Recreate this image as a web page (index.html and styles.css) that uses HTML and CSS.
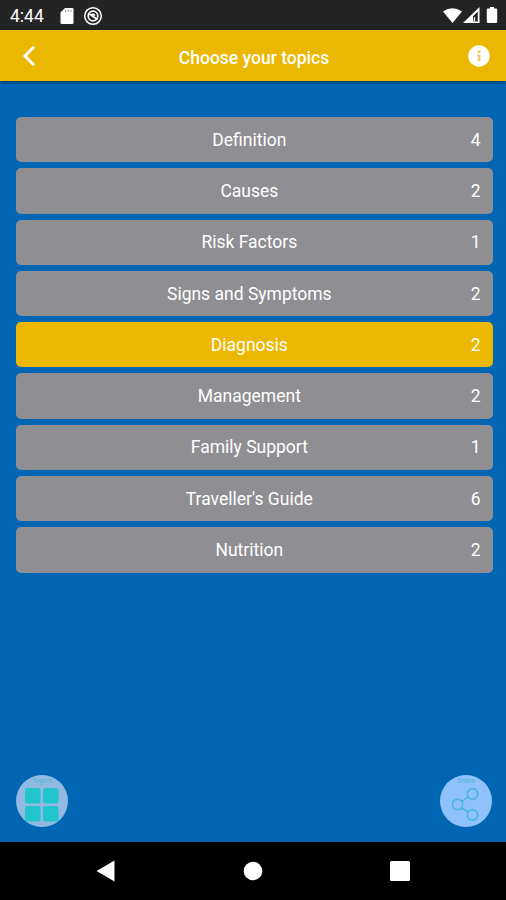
FILE: index.html
```html
<!DOCTYPE html>
<html lang="en">
  <head>
    <meta charset="UTF-8" />
    <meta name="viewport" content="width=device-width, initial-scale=1.0" />
    <title>Choose your topics</title>

    <link rel="stylesheet" href="styles.css">
  </head>

  <body>
    <div class="status-bar">
      <span class="clock">4:44</span>
      <svg class="sd-icon" width="14" height="18" viewBox="0 0 14 18">
        <path fill="#fff" d="M5 1h7.300q1.200 0 1.200 1.200v13.600q0 1.200-1.200 1.200H1.700Q.5 17 .5 15.800V5.500z"/>
        <path stroke="#aaa" stroke-width="1.200" d="M5.700 2.500v2.500M8.300 2.500v2.500M10.900 2.500v2.500"/>
      </svg>
      <svg class="sync-icon" width="20" height="20" viewBox="0 0 20 20" fill="none" stroke="#fff">
        <circle cx="10" cy="10" r="8.300" stroke-width="1.500"/>
        <circle cx="10" cy="10" r="4.800" stroke-width="1.700"/>
        <path stroke-width="1.700" d="M6.500 8l8 5.500M8 9q2-1.500 4 .5"/>
      </svg>
      <svg class="signal-icons" width="56" height="20" viewBox="0 0 56 20">
        <path fill="#fff" d="M0 5.500Q9.500-1.200 19 5.500L9.500 17z"/>
        <path fill="#fff" fill-rule="evenodd" d="M20 17L36.500 1v16zM30 15.500h4.800V5.500L30 10.200z"/>
        <path fill="#fff" d="M32.200 10.500v5h-1.500v-3.500z"/>
        <path fill="#fff" d="M47 1h4v1.500h2.200q1 0 1 1v12.500q0 1-1 1h-8.400q-1 0-1-1V3.500q0-1 1-1H47z"/>
      </svg>
    </div>

    <div class="header">
      <button class="header-button">
        <svg width="14" height="22" viewBox="0 0 14 22">
          <path fill="none" stroke="#fff" stroke-width="3" d="M12 1.800L3 11l9 9.200"/>
        </svg>
      </button>
      <p class="title">Choose your topics</p>
      <button class="header-button">
        <svg width="22" height="22" viewBox="0 0 22 22">
          <circle cx="11" cy="11" r="10.700" fill="#fff"/>
          <path fill="#f3c877" d="M9.700 5.300h2.800v2.600H9.700zM9 9.500h3.500v6.500H9.900v-4.800H9z"/>
        </svg>
      </button>
    </div>

    <div class="topics">
      <button class="topic"><span class="name">Definition</span><span class="count">4</span></button>
      <button class="topic"><span class="name">Causes</span><span class="count">2</span></button>
      <button class="topic"><span class="name">Risk Factors</span><span class="count">1</span></button>
      <button class="topic"><span class="name">Signs and Symptoms</span><span class="count">2</span></button>
      <button class="topic selected"><span class="name">Diagnosis</span><span class="count">2</span></button>
      <button class="topic"><span class="name">Management</span><span class="count">2</span></button>
      <button class="topic"><span class="name">Family Support</span><span class="count">1</span></button>
      <button class="topic"><span class="name">Traveller's Guide</span><span class="count">6</span></button>
      <button class="topic"><span class="name">Nutrition</span><span class="count">2</span></button>
    </div>

    <div class="actions">
      <button class="round-button menu-button">
        <span class="round-label">Topics</span>
        <svg width="34" height="34" viewBox="0 0 34 34" fill="#20c5cd">
          <rect x="0" y="0" width="15.500" height="15.500" rx="2.500"/>
          <rect x="18" y="0" width="15.500" height="15.500" rx="2.500"/>
          <rect x="0" y="18" width="15.500" height="15.500" rx="2.500"/>
          <rect x="18" y="18" width="15.500" height="15.500" rx="2.500"/>
        </svg>
      </button>
      <button class="round-button share-button">
        <span class="round-label">Share</span>
        <svg width="28" height="34" viewBox="0 0 28 34" fill="none" stroke="#46b5df" stroke-width="1.500">
          <circle cx="5.500" cy="16.500" r="5.300"/>
          <circle cx="20.500" cy="6" r="5.300"/>
          <circle cx="20.500" cy="27" r="5.300"/>
          <path d="M10 13.500l6-4.500M9.700 20l6.500 4"/>
        </svg>
      </button>
    </div>

    <div class="nav-bar">
      <svg width="20" height="22" viewBox="0 0 20 22"><path fill="#fff" d="M18.500.5v21L.5 11z"/></svg>
      <svg width="20" height="20" viewBox="0 0 20 20"><circle cx="10" cy="10" r="9.300" fill="#fff"/></svg>
      <svg width="20" height="20" viewBox="0 0 20 20"><rect width="20" height="20" rx="1.500" fill="#fff"/></svg>
    </div>
  </body>
</html>
```
FILE: styles.css
```css
body{
  display: flex;
  flex-direction: column;
  height: 900px;
  margin: 0;
  background-color: #0066b4;
  color: white;
  font-family: Roboto, sans-serif;
}

button{
  border: none;
  padding: 0;
  background-color: transparent;
  color: white;
  font-family: inherit;
  cursor: pointer;
}

svg{
  display: block;
}

.status-bar{
  display: flex;
  align-items: center;
  box-sizing: border-box;
  height: 30px;
  padding: 1px 7px 0 10px;
  background-color: #242424;
}

.clock{
  width: 50px;
  font-size: 17.5px;
}

.sync-icon{
  margin-left: 9px;
}

.signal-icons{
  margin-left: auto;
}

.header{
  display: flex;
  align-items: center;
  justify-content: space-between;
  box-sizing: border-box;
  height: 51px;
  padding: 0 16px 0 22px;
  background-color: #ebb700;
  box-shadow: 0 1px 4px rgba(0, 0, 0, 0.6);
}

.title{
  margin: 5px 0 0 4px;
  font-size: 17.5px;
  font-weight: 500;
}

.topics{
  display: flex;
  flex-direction: column;
  gap: 6px;
  padding: 36px 13.5px 0 15.5px;
}

.topic{
  display: flex;
  align-items: center;
  height: 45.3px;
  padding: 0 12px 0 12.5px;
  background-color: #8f8e93;
  border-radius: 5px;
  font-size: 17.5px;
}

.selected{
  background-color: #ebb700;
}

.name{
  flex: 1;
}

.actions{
  display: flex;
  justify-content: space-between;
  margin-top: auto;
  padding: 0 14px 15px 16px;
}

.round-button{
  display: flex;
  flex-direction: column;
  align-items: center;
  width: 52px;
  height: 52px;
  border-radius: 999px;
}

.menu-button{
  background-color: #91b9e1;
}

.share-button{
  background-color: #8fc1fb;
}

.round-label{
  height: 13px;
  padding-top: 2px;
  box-sizing: border-box;
  color: #55b5d6;
  font-size: 7px;
  line-height: 9px;
}

.nav-bar{
  display: flex;
  align-items: center;
  justify-content: space-between;
  box-sizing: border-box;
  height: 58px;
  padding: 0 96px;
  background-color: black;
}
```
